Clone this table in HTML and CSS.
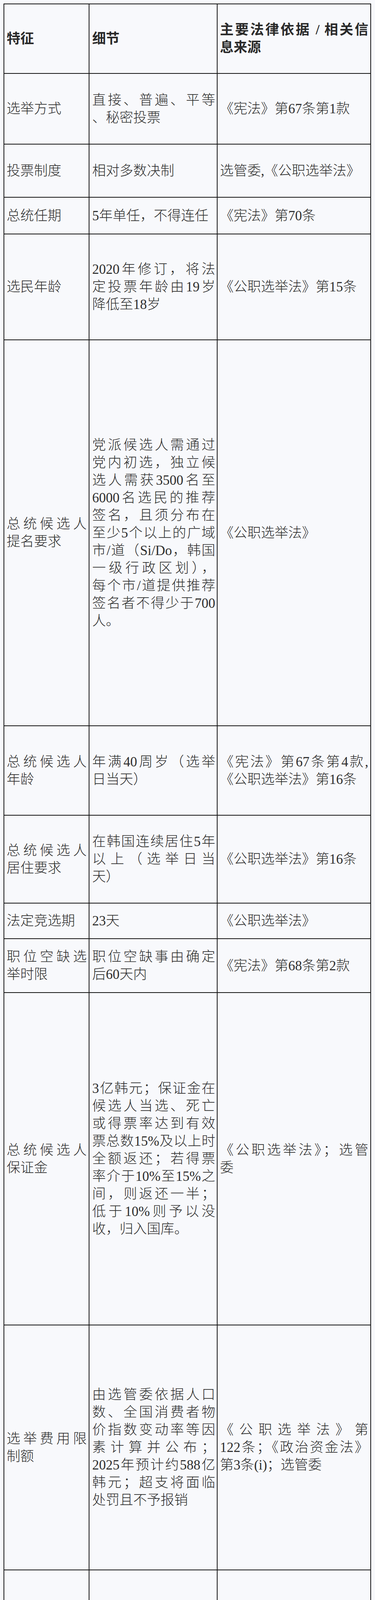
FILE: index.html
```html
<!DOCTYPE html>
<html lang="zh-CN">
<head>
<meta charset="utf-8">
<title>韩国总统选举制度一览</title>
<link rel="stylesheet" href="styles.css">
</head>
<body>
<div class="sheet" role="table">
  <div class="c c1 hd" role="columnheader"><div class="t">特征</div></div>
  <div class="c c2 hd" role="columnheader"><div class="t">细节</div></div>
  <div class="c c3 hd" role="columnheader"><div class="t"><span class="l">主要法律依据 / 相关信</span><span class="l">息来源</span></div></div>

  <div class="c c1"><div class="t">选举方式</div></div>
  <div class="c c2"><div class="t"><span class="l">直接、普遍、平等</span><span class="l">、秘密投票</span></div></div>
  <div class="c c3"><div class="t">《宪法》第67条第1款</div></div>

  <div class="c c1"><div class="t">投票制度</div></div>
  <div class="c c2"><div class="t">相对多数决制</div></div>
  <div class="c c3"><div class="t">选管委,《公职选举法》</div></div>

  <div class="c c1"><div class="t">总统任期</div></div>
  <div class="c c2"><div class="t">5年单任，不得连任</div></div>
  <div class="c c3"><div class="t">《宪法》第70条</div></div>

  <div class="c c1"><div class="t">选民年龄</div></div>
  <div class="c c2"><div class="t"><span class="l">2020年修订，将法</span><span class="l">定投票年龄由19岁</span><span class="l">降低至18岁</span></div></div>
  <div class="c c3"><div class="t">《公职选举法》第15条</div></div>

  <div class="c c1"><div class="t"><span class="l">总统候选人</span><span class="l">提名要求</span></div></div>
  <div class="c c2"><div class="t"><span class="l">党派候选人需通过</span><span class="l">党内初选，独立候</span><span class="l">选人需获3500名至</span><span class="l">6000名选民的推荐</span><span class="l">签名，且须分布在</span><span class="l">至少5个以上的广域</span><span class="l">市/道（Si/Do，韩国</span><span class="l">一级行政区划），</span><span class="l">每个市/道提供推荐</span><span class="l">签名者不得少于700</span><span class="l">人。</span></div></div>
  <div class="c c3"><div class="t">《公职选举法》</div></div>

  <div class="c c1"><div class="t"><span class="l">总统候选人</span><span class="l">年龄</span></div></div>
  <div class="c c2"><div class="t"><span class="l">年满40周岁（选举</span><span class="l">日当天）</span></div></div>
  <div class="c c3"><div class="t"><span class="l">《宪法》第67条第4款,</span><span class="l">《公职选举法》第16条</span></div></div>

  <div class="c c1"><div class="t"><span class="l">总统候选人</span><span class="l">居住要求</span></div></div>
  <div class="c c2"><div class="t"><span class="l">在韩国连续居住5年</span><span class="l">以上（选举日当</span><span class="l">天）</span></div></div>
  <div class="c c3"><div class="t">《公职选举法》第16条</div></div>

  <div class="c c1"><div class="t">法定竞选期</div></div>
  <div class="c c2"><div class="t">23天</div></div>
  <div class="c c3"><div class="t">《公职选举法》</div></div>

  <div class="c c1"><div class="t"><span class="l">职位空缺选</span><span class="l">举时限</span></div></div>
  <div class="c c2"><div class="t"><span class="l">职位空缺事由确定</span><span class="l">后60天内</span></div></div>
  <div class="c c3"><div class="t">《宪法》第68条第2款</div></div>

  <div class="c c1"><div class="t"><span class="l">总统候选人</span><span class="l">保证金</span></div></div>
  <div class="c c2"><div class="t"><span class="l">3亿韩元；保证金在</span><span class="l">候选人当选、死亡</span><span class="l">或得票率达到有效</span><span class="l">票总数15%及以上时</span><span class="l">全额返还；若得票</span><span class="l">率介于10%至15%之</span><span class="l">间，则返还一半；</span><span class="l">低于10%则予以没</span><span class="l">收，归入国库。</span></div></div>
  <div class="c c3"><div class="t"><span class="l">《公职选举法》；选管</span><span class="l">委</span></div></div>

  <div class="c c1"><div class="t"><span class="l">选举费用限</span><span class="l">制额</span></div></div>
  <div class="c c2"><div class="t"><span class="l">由选管委依据人口</span><span class="l">数、全国消费者物</span><span class="l">价指数变动率等因</span><span class="l">素计算并公布；</span><span class="l">2025年预计约588亿</span><span class="l">韩元；超支将面临</span><span class="l">处罚且不予报销</span></div></div>
  <div class="c c3"><div class="t"><span class="l">《公职选举法》第</span><span class="l">122条；《政治资金法》</span><span class="l">第3条(i)；选管委</span></div></div>

  <div class="c c1"><div class="t"><span class="l">费用报销门</span><span class="l">槛</span></div></div>
  <div class="c c2"><div class="t"><span class="l">得票率15%以上为全</span><span class="l">额，10%-15%为半</span><span class="l">额</span></div></div>
  <div class="c c3"><div class="t"><span class="l">《公职选举法》第122条</span><span class="l">之2；《政治资金法》；</span><span class="l">选管委</span></div></div>

  <div class="c c1"><div class="t"><span class="l">选举管理机</span><span class="l">构</span></div></div>
  <div class="c c2"><div class="t"><span class="l">中央选举管理委员</span><span class="l">会 (选管委)</span></div></div>
  <div class="c c3"><div class="t"><span class="l">《宪法》第114条, 选管</span><span class="l">委官网</span></div></div>

  <div class="c c1"><div class="t"><span class="l">提前投票</span><span class="l">（又译“事前</span><span class="l">投票”）</span></div></div>
  <div class="c c2"><div class="t"><span class="l">2013年立法通过，</span><span class="l">并在2017年第19届</span><span class="l">总统选举中首次实</span><span class="l">行；在正式投票日</span><span class="l">前5天左右设置为期</span><span class="l">两天的全国提前投</span><span class="l">票日；被认为能有</span><span class="l">效提高投票率</span></div></div>
  <div class="c c3"><div class="t">《公职选举法》, 选管委</div></div>

  <div class="c c1"><div class="t">海外投票</div></div>
  <div class="c c2"><div class="t"><span class="l">2009年通过立法，</span><span class="l">2012年首次在国会</span><span class="l">选举中实施。允许</span><span class="l">海外公民在驻外使</span><span class="l">领馆投票；2024年4</span><span class="l">月国会选举海外投</span><span class="l">票率达62.8%，创历</span><span class="l">史新高</span></div></div>
  <div class="c c3"><div class="t">《公职选举法》, 选管委</div></div>
</div>
</body>
</html>
```

FILE: styles.css
```css
html {
  background: #f8f9fc;
}

body {
  margin: 0;
  padding: 9px 0 10px 9px;
  background: #f8f9fc;
  color: #2e2e2e;
  font-family: "Liberation Serif", "Noto Sans CJK SC", serif;
  font-size: 35px;
  font-weight: 300;
  line-height: 45px;
}

.sheet {
  display: grid;
  grid-template-columns: 218px 328px 393px;
  grid-template-rows:
    178px 181px 136px 94px 271px 988px 229px 225px
    91px 138px 851px 627px 316px 182px 717px 720px;
  width: 941px;
  box-sizing: border-box;
  border-top: 2px solid #141414;
  border-left: 2px solid #141414;
}

.c {
  display: flex;
  align-items: center;
  box-sizing: border-box;
  min-width: 0;
  padding: 0 5px 0 6px;
  border-right: 2px solid #141414;
  border-bottom: 2px solid #141414;
}

.c2 {
  padding: 0 4px 0 7px;
}

.hd {
  font-weight: 700;
  color: #2a2a2a;
}

.t {
  width: 100%;
  text-align: justify;
}

.l {
  display: block;
}

.l:not(:last-child) {
  text-align-last: justify;
}
```
